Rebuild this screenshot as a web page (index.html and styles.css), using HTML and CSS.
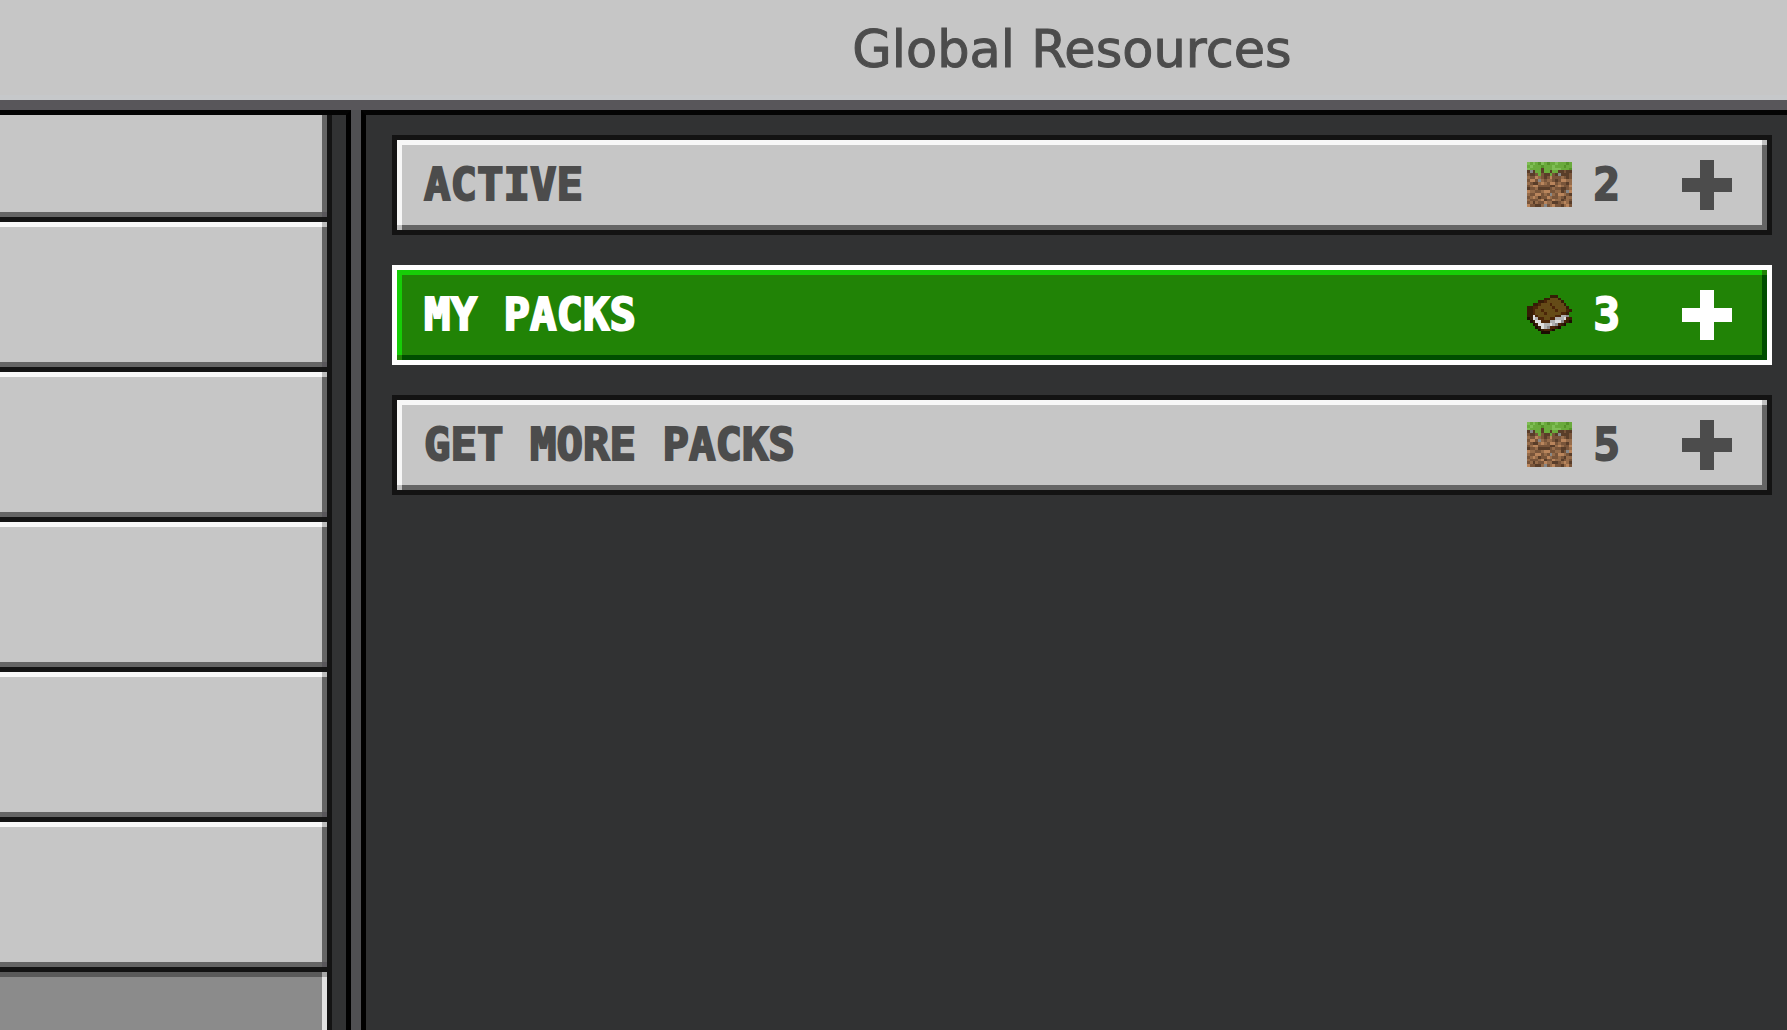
FILE: index.html
```html
<!DOCTYPE html>
<html lang="en">
<head>
<meta charset="utf-8">
<title>Global Resources</title>
<link rel="stylesheet" href="styles.css">
</head>
<body>
<header class="topbar"><h1 class="topbar-title">Global Resources</h1></header>
<div class="layout">
  <nav class="sidebar" aria-label="Settings sections">
    <button class="nav-item nav-item-clipped" type="button" aria-label="Section 1"></button>
    <button class="nav-item" type="button" aria-label="Section 2"></button>
    <button class="nav-item" type="button" aria-label="Section 3"></button>
    <button class="nav-item" type="button" aria-label="Section 4"></button>
    <button class="nav-item" type="button" aria-label="Section 5"></button>
    <button class="nav-item" type="button" aria-label="Section 6"></button>
    <button class="nav-item nav-item-selected" type="button" aria-label="Section 7" aria-current="page"></button>
  </nav>
  <main class="packs">
    <button class="pack" type="button" aria-expanded="false">
      <span class="pack-name">ACTIVE</span>
      <svg class="pack-icon" data-sprite="grass" viewBox="0 0 16 16" shape-rendering="crispEdges" aria-hidden="true"></svg>
      <span class="pack-count">2</span>
      <svg class="pack-plus" viewBox="0 0 50 50" aria-hidden="true"><path d="M18 0h14v18h18v14H32v18H18V32H0V18h18z"/></svg>
    </button>
    <button class="pack pack-focused" type="button" aria-expanded="false">
      <span class="pack-name">MY PACKS</span>
      <svg class="pack-icon" data-sprite="book" viewBox="0 0 16 16" shape-rendering="crispEdges" aria-hidden="true"></svg>
      <span class="pack-count">3</span>
      <svg class="pack-plus" viewBox="0 0 50 50" aria-hidden="true"><path d="M18 0h14v18h18v14H32v18H18V32H0V18h18z"/></svg>
    </button>
    <button class="pack" type="button" aria-expanded="false">
      <span class="pack-name">GET MORE PACKS</span>
      <svg class="pack-icon" data-sprite="grass" viewBox="0 0 16 16" shape-rendering="crispEdges" aria-hidden="true"></svg>
      <span class="pack-count">5</span>
      <svg class="pack-plus" viewBox="0 0 50 50" aria-hidden="true"><path d="M18 0h14v18h18v14H32v18H18V32H0V18h18z"/></svg>
    </button>
  </main>
</div>
<script src="sprites.js"></script>
</body>
</html>
```
FILE: styles.css
```css
* { box-sizing: border-box; }

body {
  margin: 0;
  min-height: 100vh;
  display: flex;
  flex-direction: column;
  background: #313233;
  font-family: "DejaVu Sans", sans-serif;
  color: #4c4c4c;
}

button {
  font: inherit;
  color: inherit;
  border-radius: 0;
  cursor: pointer;
}

.topbar {
  height: 110px;
  padding-left: 357px;
  display: flex;
  align-items: center;
  justify-content: center;
  background: #c6c6c6;
  border-bottom: 10px solid #58565a;
  box-shadow: inset 0 -5px #c6c8ca;
}

.topbar-title {
  margin: 0;
  font-size: 51px;
  line-height: 60px;
  font-weight: 400;
  -webkit-text-stroke: 1px currentColor;
}

.layout {
  flex: 1;
  display: grid;
  grid-template-columns: 351px 1fr;
}

/* The list is cut off by the bottom of the window */
.sidebar {
  height: calc(100vh - 110px);
  overflow: hidden;
  padding-right: 14px;
  border-top: 5px solid #040404;
  border-right: 5px solid #000;
}

.nav-item {
  display: block;
  width: 100%;
  height: 150px;
  padding: 0;
  border: 0 solid #131313;
  border-width: 0 5px 5px 0;
  background:
    linear-gradient(#bdbdbd, #bdbdbd) right top / 5px 5px no-repeat,
    linear-gradient(#58565a, #58565a) right bottom / 5px 5px no-repeat,
    linear-gradient(#f7f7f7, #f7f7f7) top / 100% 5px no-repeat,
    linear-gradient(#656565, #656565) bottom / 100% 5px no-repeat,
    linear-gradient(#656565, #656565) right / 5px 100% no-repeat,
    #c6c6c6;
}

.nav-item-clipped {
  height: 107px;
  background:
    linear-gradient(#58565a, #58565a) right bottom / 5px 5px no-repeat,
    linear-gradient(#656565, #656565) bottom / 100% 5px no-repeat,
    linear-gradient(#656565, #656565) right / 5px 100% no-repeat,
    #c6c6c6;
}

.nav-item-selected {
  background:
    linear-gradient(#a8a8a8, #a8a8a8) right top / 5px 5px no-repeat,
    linear-gradient(#5a5a5a, #5a5a5a) top / 100% 5px no-repeat,
    linear-gradient(#e2e2e2, #e2e2e2) right / 5px 100% no-repeat,
    #8b8b8b;
}

.packs {
  display: flex;
  flex-direction: column;
  gap: 30px;
  padding: 20px 15px 20px 26px;
  border-left: 5px solid #000;
  border-top: 5px solid #040404;
  margin-left: 10px;
  box-shadow: -10px 0 #505053;
  clip-path: inset(0 0 0 -10px);
}

.pack {
  display: flex;
  align-items: center;
  height: 100px;
  padding: 0 35px 0 27px;
  border: 5px solid #131313;
  text-align: left;
  background:
    linear-gradient(#c0c0c0, #c0c0c0) right top / 5px 5px no-repeat,
    linear-gradient(#c0c0c0, #c0c0c0) left bottom / 5px 5px no-repeat,
    linear-gradient(#f7f7f7, #f7f7f7) top / 100% 5px no-repeat,
    linear-gradient(#656565, #656565) bottom / 100% 5px no-repeat,
    linear-gradient(#f7f7f7, #f7f7f7) left / 5px 100% no-repeat,
    linear-gradient(#656565, #656565) right / 5px 100% no-repeat,
    #c6c6c6;
}

.pack-focused {
  color: #fff;
  border-color: #fff;
  background:
    linear-gradient(#218306, #218306) right top / 5px 5px no-repeat,
    linear-gradient(#218306, #218306) left bottom / 5px 5px no-repeat,
    linear-gradient(#17cd07, #17cd07) top / 100% 5px no-repeat,
    linear-gradient(#004e00, #004e00) bottom / 100% 5px no-repeat,
    linear-gradient(#17cd07, #17cd07) left / 5px 100% no-repeat,
    linear-gradient(#004e00, #004e00) right / 5px 100% no-repeat,
    #218306;
}

.pack-name,
.pack-count {
  font-family: "DejaVu Sans Mono", monospace;
  font-size: 44px;
  line-height: 54px;
  font-weight: 700;
  -webkit-text-stroke: 2px currentColor;
}

.pack-name { flex: 1; }

.pack-icon {
  width: 45px;
  height: 45px;
  margin: 0 22px 1px 0;
}

.pack-count { margin-right: 62px; }

.pack-plus {
  width: 50px;
  height: 50px;
  fill: currentColor;
}
```
FILE: sprites.js
```js
// 16x16 pixel sprites: one letter per pixel, "." is transparent.
const sprites = {
  grass: {
    colors: { L: "#7fbd55", G: "#6aaa3c", D: "#559329", d: "#593d29", m: "#79553a", b: "#966c4a", l: "#b9855c", g: "#878787" },
    rows: [
      "LGLGDLGDGGLGGGDG",
      "GLGGGDGGGLGGGDGG",
      "LGGGGdGGGLLLGGGD",
      "dgdGGdGGdGGddmdd",
      "mddmGmddGmdgdddm",
      "bmmlbmdmlmmmbmdm",
      "mllmgbmbbmdmllbb",
      "bmddblbmllmbmmdb",
      "mbllmmmmddblbmml",
      "dmmbddddmbmmddmb",
      "lbbmmbllmmbbdmgl",
      "bmmllmbmgbmllbmd",
      "mblbdmmlbmmbmdbb",
      "bmmmbldmmlbbdmbm",
      "mbdbmmlbbddmblbd",
      "lmmddbgmblmmdblm"
    ]
  },
  book: {
    colors: { k: "#1b0d02", d: "#351d06", r: "#4b2508", b: "#654b17", w: "#dedede", s: "#b1b1b1", g: "#8d8d8d" },
    rows: [
      "................",
      "........ddd.....",
      "......ddbbbd....",
      "....ddrbbbbbd...",
      "..ddrbbbrbbbbd..",
      "ddrrbbbbbrbbbbd.",
      "ddrbbrbbbbrbbbrd",
      "ddrbbbrbbbbbrrd.",
      "ddwrbbbbbbrrssg.",
      "kdwsrrbbrrssswrd",
      ".kdwwrrrsswwgrdk",
      "..kdwwsswsgrdk..",
      "...kdwsgrrdk....",
      "....kdrrdk......",
      ".....kkk........",
      "................"
    ]
  }
};

document.querySelectorAll("[data-sprite]").forEach((svg) => {
  const { colors, rows } = sprites[svg.dataset.sprite];
  rows.forEach((row, y) => {
    [...row].forEach((key, x) => {
      if (key === ".") return;
      const pixel = document.createElementNS("http://www.w3.org/2000/svg", "rect");
      pixel.setAttribute("x", x);
      pixel.setAttribute("y", y);
      pixel.setAttribute("width", 1);
      pixel.setAttribute("height", 1);
      pixel.setAttribute("fill", colors[key]);
      svg.append(pixel);
    });
  });
});
```
